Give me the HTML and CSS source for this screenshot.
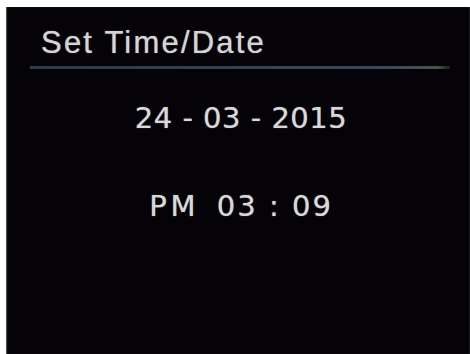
FILE: index.html
```html
<!DOCTYPE html>
<html>
<head>
<meta charset="utf-8">
<link rel="stylesheet" href="styles.css">
</head>
<body>
<div class="screen">
  <div class="title">Set Time/Date</div>
  <div class="rule"></div>
  <div class="date">24 - 03 - 2015</div>
  <div class="time"><span class="ampm">PM</span> 03 : 09</div>
</div>
</body>
</html>
```
FILE: styles.css
```css
html, body {
  margin: 0;
  padding: 0;
  background: #ffffff;
  width: 470px;
  height: 354px;
  overflow: hidden;
}
.screen {
  margin: 7px 0 0 6px;
  height: 347px;
  background: #050308;
  display: flex;
  flex-direction: column;
  box-shadow: inset 1px 0 1px #555, inset -7px 0 0 -6px #1a1a1e;
}
.title {
  padding: 18px 0 0 35px;
  font-family: "Liberation Sans", Arial, sans-serif;
  font-size: 31px;
  line-height: 36px;
  letter-spacing: 2.2px;
  color: #d4d4d6;
  text-shadow: 0 0 1px rgba(220, 220, 220, 0.8);
}
.rule {
  margin: 5px 0 0 24px;
  width: 420px;
  height: 3px;
  background: linear-gradient(to right, #2a3a50, #36485f 85%, #4a5548 97%, #1a1f1c);
}
.date, .time {
  font-family: "DejaVu Sans", Verdana, sans-serif;
  font-size: 29px;
  line-height: 34px;
  color: #d8d8da;
  text-align: center;
  white-space: pre;
  padding-left: 6px;
  text-shadow: 0 0 1px rgba(220, 220, 220, 0.7);
}
.date {
  margin-top: 32px;
  letter-spacing: 0.5px;
}
.time {
  margin-top: 54px;
  letter-spacing: 2px;
}
.ampm {
  letter-spacing: 4px;
  margin-right: 6px;
}
```
